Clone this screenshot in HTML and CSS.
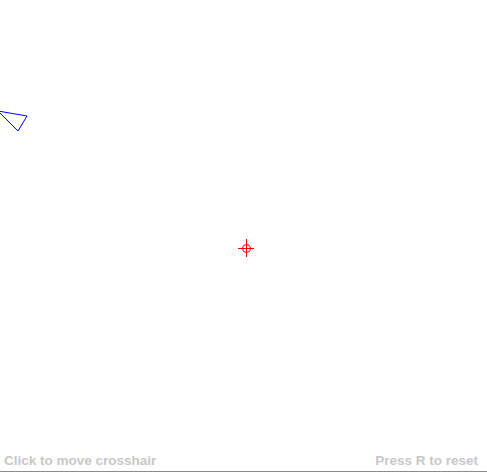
FILE: index.html
```html
<!DOCTYPE html>
<html>
<head>
<meta charset="utf-8">
<link rel="stylesheet" href="styles.css">
</head>
<body>
<div class="app">
  <svg class="stage" width="487" height="450" viewBox="0 0 487 450">
    <polygon class="ship" points="-2,111 27,116 18,131"/>
    <g class="cross">
      <line x1="238" y1="248.5" x2="254" y2="248.5"/>
      <line x1="246.5" y1="239" x2="246.5" y2="257"/>
      <circle cx="246.5" cy="248.5" r="4"/>
    </g>
  </svg>
  <div class="footer">
    <span class="hint">Click to move crosshair</span>
    <span class="hint">Press R to reset</span>
  </div>
  <div class="rule"></div>
</div>
</body>
</html>
```
FILE: styles.css
```css
html, body {
  margin: 0;
  padding: 0;
  background: #ffffff;
}
.app {
  width: 487px;
  height: 473px;
  display: flex;
  flex-direction: column;
  overflow: hidden;
}
.stage {
  display: block;
  flex: 0 0 450px;
}
.ship {
  fill: none;
  stroke: #0000ff;
  stroke-width: 1;
}
.cross line, .cross circle {
  fill: none;
  stroke: #ff0000;
  stroke-width: 1;
}
.footer {
  display: flex;
  justify-content: space-between;
  align-items: flex-end;
  height: 18px;
  padding: 0 9px 3px 4px;
  font-family: "Liberation Sans", Arial, sans-serif;
  font-weight: bold;
  font-size: 13.5px;
  line-height: 14px;
  color: #c8c8c8;
}
.rule {
  flex: 0 0 1px;
  background: #8c8c8c;
}
```
